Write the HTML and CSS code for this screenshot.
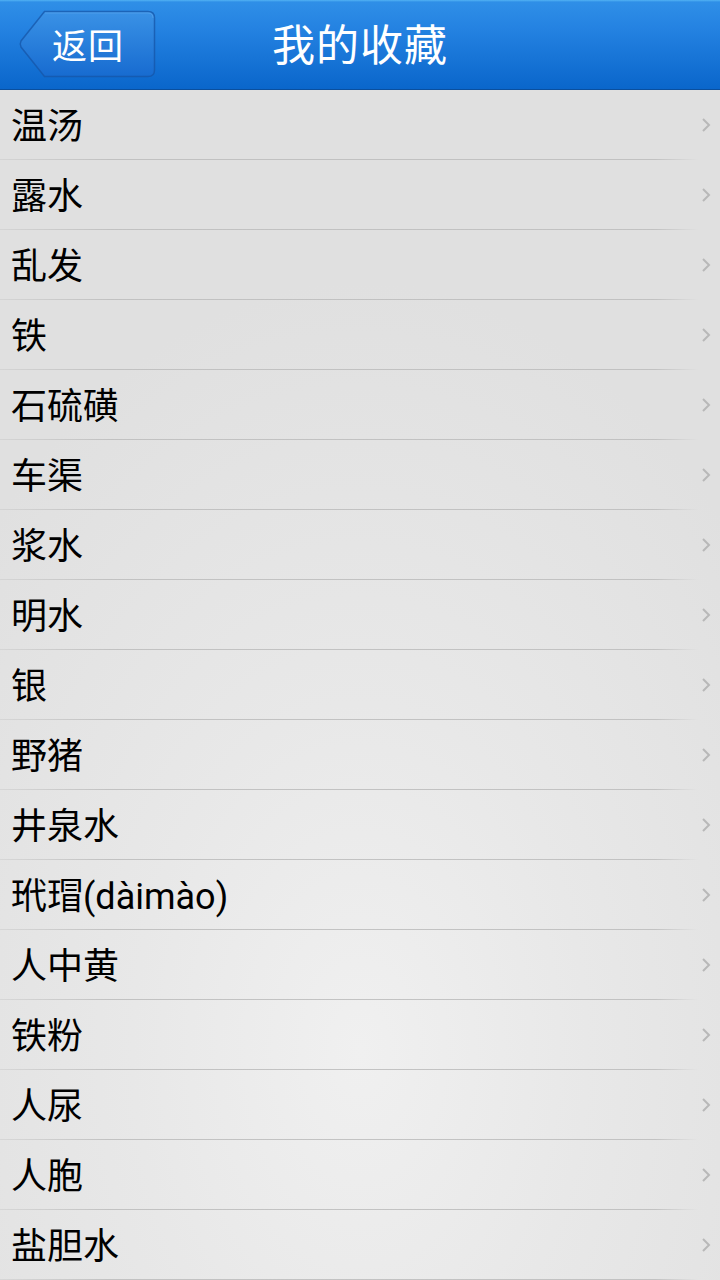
FILE: index.html
```html
<!DOCTYPE html>
<html lang="zh">
<head>
<meta charset="utf-8">
<title>我的收藏</title>
<link rel="stylesheet" href="styles.css">
</head>
<body>
<div class="app">
  <header class="topbar">
    <div class="left">
      <a class="back">
        <svg class="back-shape" viewBox="0 0 138 68" width="138" height="68">
          <defs>
            <linearGradient id="bg" x1="0" y1="0" x2="0" y2="1">
              <stop offset="0" stop-color="#3a92e6"/>
              <stop offset="1" stop-color="#176bd0"/>
            </linearGradient>
          </defs>
          <path d="M26.5 1.5 H130 Q136.5 1.5 136.5 8 V60 Q136.5 66.5 130 66.5 H26.5 L3 37 Q1.5 34 3 31 Z" fill="url(#bg)" stroke="#1656a8" stroke-opacity="0.75" stroke-width="1.5"/>
          <path d="M27 3 H130 Q135 3 135 8" fill="none" stroke="#5fa8ee" stroke-opacity="0.6" stroke-width="1"/>
        </svg>
        <span class="back-text">返回</span>
      </a>
    </div>
    <h1 class="title">我的收藏</h1>
    <div class="right"></div>
  </header>
  <ul class="list">
    <li class="row"><span class="name">温汤</span><svg class="chev" viewBox="0 0 10 16" width="10" height="16"><polyline points="2,2 8,8 2,14"/></svg></li>
    <li class="row"><span class="name">露水</span><svg class="chev" viewBox="0 0 10 16" width="10" height="16"><polyline points="2,2 8,8 2,14"/></svg></li>
    <li class="row"><span class="name">乱发</span><svg class="chev" viewBox="0 0 10 16" width="10" height="16"><polyline points="2,2 8,8 2,14"/></svg></li>
    <li class="row"><span class="name">铁</span><svg class="chev" viewBox="0 0 10 16" width="10" height="16"><polyline points="2,2 8,8 2,14"/></svg></li>
    <li class="row"><span class="name">石硫磺</span><svg class="chev" viewBox="0 0 10 16" width="10" height="16"><polyline points="2,2 8,8 2,14"/></svg></li>
    <li class="row"><span class="name">车渠</span><svg class="chev" viewBox="0 0 10 16" width="10" height="16"><polyline points="2,2 8,8 2,14"/></svg></li>
    <li class="row"><span class="name">浆水</span><svg class="chev" viewBox="0 0 10 16" width="10" height="16"><polyline points="2,2 8,8 2,14"/></svg></li>
    <li class="row"><span class="name">明水</span><svg class="chev" viewBox="0 0 10 16" width="10" height="16"><polyline points="2,2 8,8 2,14"/></svg></li>
    <li class="row"><span class="name">银</span><svg class="chev" viewBox="0 0 10 16" width="10" height="16"><polyline points="2,2 8,8 2,14"/></svg></li>
    <li class="row"><span class="name">野猪</span><svg class="chev" viewBox="0 0 10 16" width="10" height="16"><polyline points="2,2 8,8 2,14"/></svg></li>
    <li class="row"><span class="name">井泉水</span><svg class="chev" viewBox="0 0 10 16" width="10" height="16"><polyline points="2,2 8,8 2,14"/></svg></li>
    <li class="row"><span class="name">玳瑁(dàimào)</span><svg class="chev" viewBox="0 0 10 16" width="10" height="16"><polyline points="2,2 8,8 2,14"/></svg></li>
    <li class="row"><span class="name">人中黄</span><svg class="chev" viewBox="0 0 10 16" width="10" height="16"><polyline points="2,2 8,8 2,14"/></svg></li>
    <li class="row"><span class="name">铁粉</span><svg class="chev" viewBox="0 0 10 16" width="10" height="16"><polyline points="2,2 8,8 2,14"/></svg></li>
    <li class="row"><span class="name">人尿</span><svg class="chev" viewBox="0 0 10 16" width="10" height="16"><polyline points="2,2 8,8 2,14"/></svg></li>
    <li class="row"><span class="name">人胞</span><svg class="chev" viewBox="0 0 10 16" width="10" height="16"><polyline points="2,2 8,8 2,14"/></svg></li>
    <li class="row"><span class="name">盐胆水</span><svg class="chev" viewBox="0 0 10 16" width="10" height="16"><polyline points="2,2 8,8 2,14"/></svg></li>
  </ul>
</div>
</body>
</html>
```

FILE: styles.css
```css
* { box-sizing: border-box; }
html, body {
  margin: 0;
  padding: 0;
  width: 720px;
  height: 1280px;
  overflow: hidden;
}
body {
  font-family: Roboto, "Noto Sans CJK SC", sans-serif;
  background: radial-gradient(ellipse 70% 60% at 50% 82%, #f0f0f0 0%, #e8e8e8 45%, #e0e0e0 100%);
  background-color: #e0e0e0;
}
.app {
  display: flex;
  flex-direction: column;
  height: 1280px;
}
.topbar {
  height: 90px;
  flex: 0 0 90px;
  display: grid;
  grid-template-columns: 1fr auto 1fr;
  align-items: center;
  background: linear-gradient(to bottom, #52b2f4 0px, #2f8fe7 2px, #2583e2 30%, #0a66cb 100%);
  border-bottom: 1px solid #0a4f9e;
}
.left {
  display: flex;
  align-items: center;
  padding-left: 18px;
  padding-bottom: 2px;
}
.back {
  position: relative;
  width: 138px;
  height: 68px;
  display: flex;
  align-items: center;
  justify-content: flex-start;
}
.back-shape {
  position: absolute;
  left: 0;
  top: 0;
}
.back-text {
  position: relative;
  margin-left: 34px;
  color: #ffffff;
  font-family: "Noto Sans CJK SC", sans-serif;
  font-size: 35px;
  line-height: 1;
  letter-spacing: 1px;
}
.title {
  margin: 0;
  color: #ffffff;
  font-family: "Noto Sans CJK SC", sans-serif;
  font-weight: 400;
  font-size: 43px;
  line-height: 1;
  letter-spacing: 1px;
  padding-bottom: 4px;
}
.list {
  list-style: none;
  margin: 0;
  padding: 0;
  flex: 1;
}
.row {
  height: 70px;
  display: flex;
  align-items: center;
  justify-content: space-between;
  padding: 0 9px 0 11px;
  background-image: linear-gradient(to right, rgba(190,190,190,0.35) 0%, rgba(190,190,190,0.9) 15%, rgba(190,190,190,0.9) 91%, rgba(190,190,190,0) 97%);
  background-size: 100% 1px;
  background-position: bottom left;
  background-repeat: no-repeat;
}
.name {
  font-size: 36px;
  color: #000000;
  line-height: 1;
  padding-top: 3px;
}
.chev polyline {
  fill: none;
  stroke: #b8b8b8;
  stroke-width: 2;
}
```
